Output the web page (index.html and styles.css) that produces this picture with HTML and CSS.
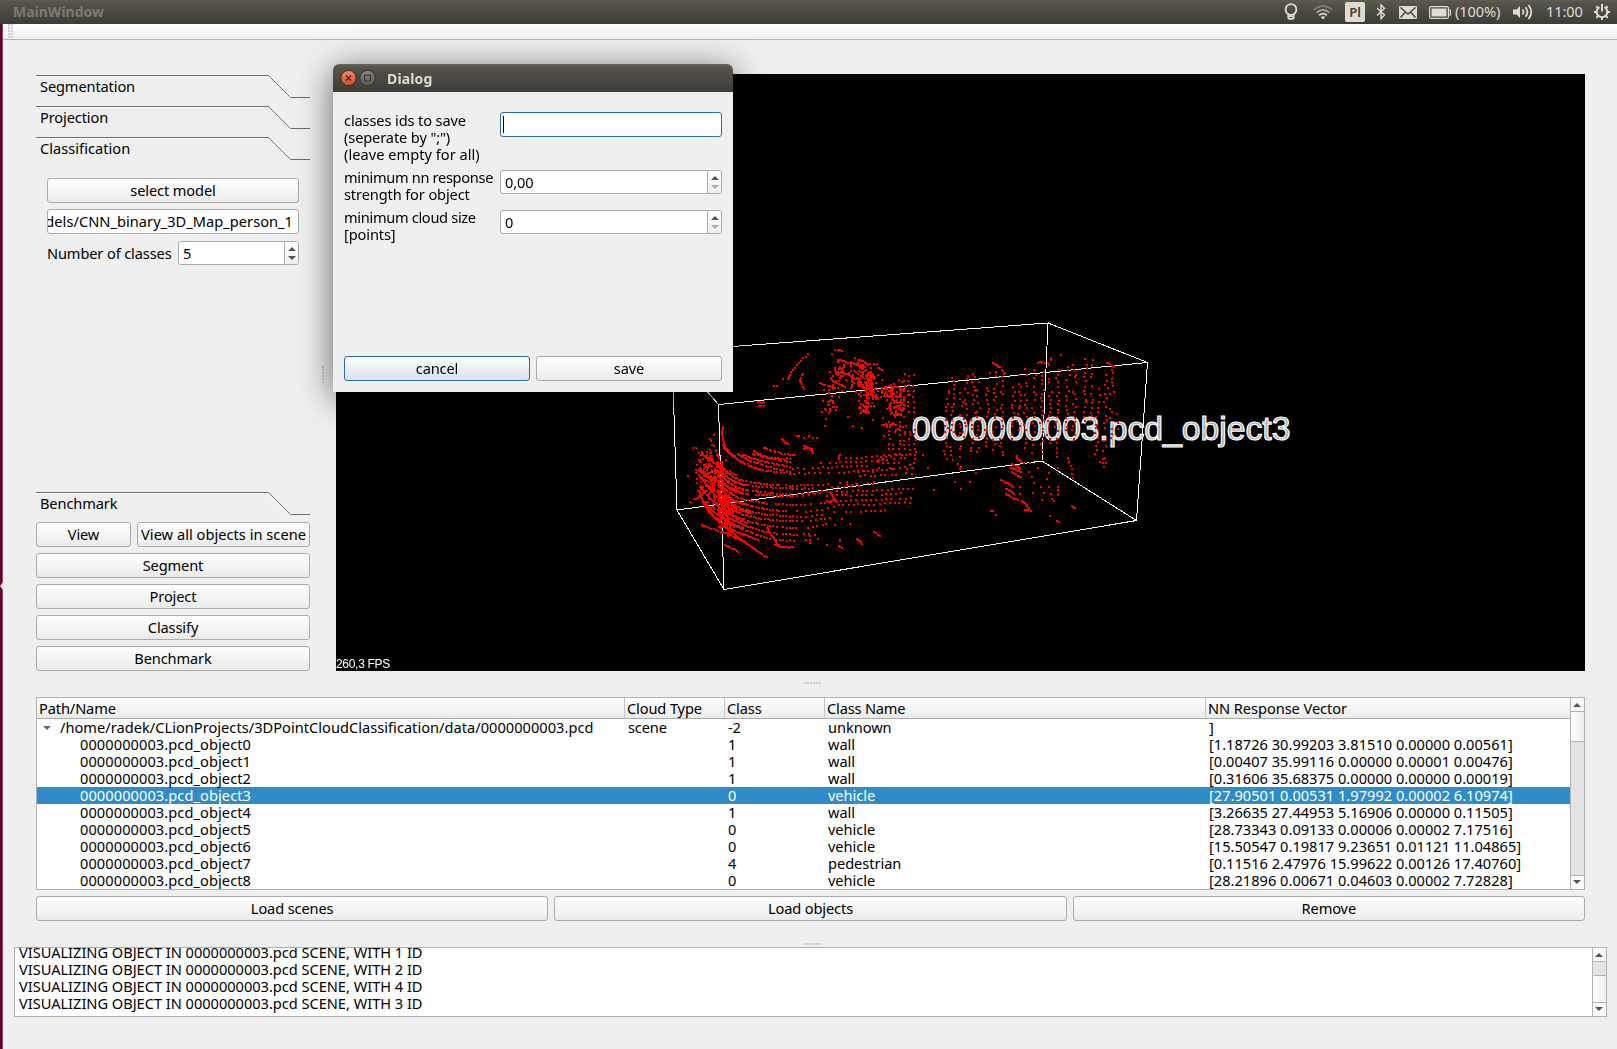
FILE: index.html
```html
<!DOCTYPE html>
<html lang="en">
<head>
<meta charset="utf-8">
<title>MainWindow</title>
<link rel="stylesheet" href="styles.css">
</head>
<body>
<header class="topbar">
  <span class="app-title">MainWindow</span>
  <div class="tray">
    <svg class="i-bulb" width="14" height="18" viewBox="0 0 14 18"><circle cx="7" cy="6.5" r="5.4"/><path d="M4.3 11v3.8q0 1 1 1h3.400q1 0 1-1V11M4.500 13.300h5"/></svg>
    <svg class="i-wifi" width="20" height="15" viewBox="0 0 20 15"><path class="dim" d="M.8 5Q10-3 19.200 5"/><path class="mid" d="M3.600 7.700Q10 2 16.400 7.700"/><path d="M6.200 10.300Q10 7 13.800 10.300"/><path class="solid" d="M7.800 12Q10 10.300 12.200 12L10 14.500z"/></svg>
    <span class="layout">Pl</span>
    <svg class="i-bt" width="10" height="18" viewBox="0 0 10 18"><path d="M1 5l7.500 7L5 15.800V2L8.500 5.500 1 12.600"/></svg>
    <svg class="i-mail" width="18" height="13" viewBox="0 0 18 13"><rect width="18" height="13" rx="1"/><path d="M1.500 1.500L9 8l7.500-6.500M1.500 11.500L6.500 6M16.500 11.500L11.500 6"/></svg>
    <svg class="i-batt" width="22" height="13" viewBox="0 0 22 13"><rect class="out" x=".6" y=".6" width="18.800" height="11.800" rx="1.500"/><rect class="in" x="2.500" y="2.500" width="15" height="8"/><path d="M20 4h1.400v5H20"/></svg>
    <span class="percent">(100%)</span>
    <svg class="i-vol" width="20" height="16" viewBox="0 0 20 16"><path class="solid" d="M0 5.500h3.500L7 2v12L3.500 10.500H0z"/><path d="M9.500 5.500q2 2.500 0 5M12.500 3.300q3.800 4.700 0 9.400M15.500 1q5.600 7 0 14"/></svg>
    <span class="clock">11:00</span>
    <svg class="i-gear" width="18" height="18" viewBox="0 0 18 18"><path d="M6.500 4.200a5.300 5.300 0 1 0 5 0M9 1v7.500"/><path class="teeth" d="M1 9h3M14 9h3M9 14v3M3.300 3.300l2 2M14.700 3.300l-2 2M3.300 14.700l2-2M14.700 14.700l-2-2"/></svg>
  </div>
</header>
<main class="shell">
  <div class="launcher-edge"><i></i></div>
  <div class="window">
    <div class="toolbar"><i class="grip"></i></div>
    <div class="upper">
      <aside class="panel">
        <div class="tab"><svg width="274" height="24"><path class="hi" d="M0 2.500H232L254 24H274"/><path d="M0 1.500H232.500L254.500 23.500H274"/></svg><span>Segmentation</span></div>
        <div class="tab"><svg width="274" height="24"><path class="hi" d="M0 2.500H232L254 24H274"/><path d="M0 1.500H232.500L254.500 23.500H274"/></svg><span>Projection</span></div>
        <div class="tab"><svg width="274" height="24"><path class="hi" d="M0 2.500H232L254 24H274"/><path d="M0 1.500H232.500L254.500 23.500H274"/></svg><span class="wide">Classification</span></div>
        <div class="page">
          <button class="btn">select model</button>
          <div class="field path"><span>dels/CNN_binary_3D_Map_person_1</span></div>
          <div class="classes"><span>Number of classes</span><div class="field spin"><span>5</span><div class="steps"><i class="up"></i><i class="down"></i></div></div></div>
        </div>
        <div class="tab"><svg width="274" height="24"><path class="hi" d="M0 2.500H232L254 24H274"/><path d="M0 1.500H232.500L254.500 23.500H274"/></svg><span>Benchmark</span></div>
        <div class="actions">
          <div class="views"><button class="btn view">View</button><button class="btn all">View all objects in scene</button></div>
          <button class="btn">Segment</button>
          <button class="btn">Project</button>
          <button class="btn">Classify</button>
          <button class="btn">Benchmark</button>
        </div>
      </aside>
      <div class="vsplit"><i></i></div>
      <section class="viewport">
        <svg class="box" width="1249" height="597"><path d="M382.500 330.500L811.500 288.500L800.500 446.500L388 515.500L382.500 330.500M336 277L712 249L706 387L341 436L336 277L382.500 330.500M712 249L811.500 288.500M706 387L800.500 446.500M341 436L388 515.500"/></svg>
        <span class="object-label">0000000003.pcd_object3</span>
        <canvas class="cloud" width="1249" height="597"></canvas>
        <span class="fps">260,3 FPS</span>
      </section>
    </div>
    <div class="hsplit"></div>
    <section class="tree">
      <div class="rows">
        <div class="row head"><span>Path/Name</span><span>Cloud Type</span><span>Class</span><span>Class Name</span><span>NN Response Vector</span></div>
        <div class="row scene"><span>/home/radek/CLionProjects/3DPointCloudClassification/data/0000000003.pcd</span><span>scene</span><span>-2</span><span>unknown</span><span>]</span></div>
        <div class="row"><span>0000000003.pcd_object0</span><span></span><span>1</span><span>wall</span><span>[1.18726 30.99203 3.81510 0.00000 0.00561]</span></div>
        <div class="row"><span>0000000003.pcd_object1</span><span></span><span>1</span><span>wall</span><span>[0.00407 35.99116 0.00000 0.00001 0.00476]</span></div>
        <div class="row"><span>0000000003.pcd_object2</span><span></span><span>1</span><span>wall</span><span>[0.31606 35.68375 0.00000 0.00000 0.00019]</span></div>
        <div class="row selected"><span>0000000003.pcd_object3</span><span></span><span>0</span><span>vehicle</span><span>[27.90501 0.00531 1.97992 0.00002 6.10974]</span></div>
        <div class="row"><span>0000000003.pcd_object4</span><span></span><span>1</span><span>wall</span><span>[3.26635 27.44953 5.16906 0.00000 0.11505]</span></div>
        <div class="row"><span>0000000003.pcd_object5</span><span></span><span>0</span><span>vehicle</span><span>[28.73343 0.09133 0.00006 0.00002 7.17516]</span></div>
        <div class="row"><span>0000000003.pcd_object6</span><span></span><span>0</span><span>vehicle</span><span>[15.50547 0.19817 9.23651 0.01121 11.04865]</span></div>
        <div class="row"><span>0000000003.pcd_object7</span><span></span><span>4</span><span>pedestrian</span><span>[0.11516 2.47976 15.99622 0.00126 17.40760]</span></div>
        <div class="row"><span>0000000003.pcd_object8</span><span></span><span>0</span><span>vehicle</span><span>[28.21896 0.00671 0.04603 0.00002 7.72828]</span></div>
      </div>
      <div class="scroll"><b><i class="up"></i></b><div class="track"><div class="thumb tree-thumb"></div></div><b class="end"><i class="down"></i></b></div>
    </section>
    <div class="loads"><button class="btn">Load scenes</button><button class="btn">Load objects</button><button class="btn">Remove</button></div>
    <div class="hsplit second"></div>
    <section class="log">
      <div class="lines">
        <p>VISUALIZING OBJECT IN 0000000003.pcd SCENE, WITH 1 ID</p>
        <p>VISUALIZING OBJECT IN 0000000003.pcd SCENE, WITH 2 ID</p>
        <p>VISUALIZING OBJECT IN 0000000003.pcd SCENE, WITH 4 ID</p>
        <p>VISUALIZING OBJECT IN 0000000003.pcd SCENE, WITH 3 ID</p>
      </div>
      <div class="scroll"><b><i class="up"></i></b><div class="track"><div class="thumb log-thumb"></div></div><b class="end"><i class="down"></i></b></div>
    </section>
  </div>
</main>
<div class="dialog">
  <div class="titlebar">
    <svg width="36" height="18" viewBox="0 0 36 18"><defs><linearGradient id="red" x2="0" y2="1"><stop stop-color="#f58a68"/><stop offset="1" stop-color="#dc4a20"/></linearGradient><linearGradient id="gray" x2="0" y2="1"><stop stop-color="#8b887e"/><stop offset="1" stop-color="#5d5b54"/></linearGradient></defs><circle cx="8.500" cy="9" r="7.600" fill="url(#red)" stroke="#35332e"/><path d="M6 6.500l5 5M11 6.500l-5 5" stroke="#48261b" stroke-width="1.300"/><circle cx="27.500" cy="9" r="7.600" fill="url(#gray)" stroke="#35332e"/><rect x="24.500" y="6" width="6" height="6" fill="none" stroke="#35332e"/></svg>
    <strong>Dialog</strong>
  </div>
  <div class="form">
    <label>classes ids to save<br>(seperate by ";")<br><span class="wide">(leave empty for all)</span></label><div class="field focus"><i class="caret"></i></div>
    <label><span class="narrow">minimum nn response</span><br>strength for object</label><div class="field spin"><span>0,00</span><div class="steps"><i class="up"></i><i class="down off"></i></div></div>
    <label><span class="narrow">minimum cloud size</span><br>[points]</label><div class="field spin"><span>0</span><div class="steps"><i class="up"></i><i class="down off"></i></div></div>
  </div>
  <div class="choices"><button class="btn default">cancel</button><button class="btn">save</button></div>
</div>
<script src="cloud.js"></script>
</body>
</html>
```
FILE: styles.css
```css
* { box-sizing: border-box; }
body {
  margin: 0; width: 1617px; height: 1049px; overflow: hidden;
  display: flex; flex-direction: column;
  font: 14.6px/17px "Noto Sans", sans-serif; letter-spacing: -.12px;
  color: #000; background: #efefef; white-space: nowrap;
}
button { font: inherit; letter-spacing: inherit; color: inherit; }
p { margin: 0; }
.wide { letter-spacing: .03px; }
.narrow { letter-spacing: -.32px; }
.topbar {
  height: 24px; flex: none; display: flex; align-items: center; justify-content: space-between;
  padding: 0 6px 0 13px; background: linear-gradient(#5f5c50 0, #56534a 3px, #3d3c38);
  color: #dfdbd2;
}
.app-title { font-weight: 700; color: #7d7a73; font-size: 14px; letter-spacing: 0; margin-top: -1px; }
.tray { display: flex; align-items: center; }
.tray svg { fill: none; stroke: #dfdbd2; stroke-width: 1.8; }
.tray .solid { fill: #dfdbd2; stroke: none; }
.i-bulb { margin-right: 15px; }
.i-wifi { margin-right: 12px; }
.i-wifi .dim { stroke: #7c7a73; }
.i-wifi .mid { stroke: #a6a39b; }
.layout { width: 20px; height: 20px; line-height: 20px; border-radius: 2px; background: #dfdbd2; color: #3d3c38; font-size: 13px; font-weight: 600; text-align: center; margin-right: 11px; }
.tray .i-bt { stroke-width: 1.4; margin-right: 13px; }
.i-mail { margin-right: 12px; }
.i-mail rect { fill: #dfdbd2; stroke: none; }
.tray .i-mail path { stroke: #45433d; stroke-width: 1.4; }
.i-batt { margin-right: 4px; }
.tray .i-batt { stroke-width: 1.2; }
.i-batt .in { fill: #dfdbd2; stroke: none; }
.percent { width: 46px; margin-right: 12px; }
.i-vol { margin-right: 13px; }
.clock { width: 36px; margin-right: 11px; }
.tray .i-gear { stroke-width: 2; }
.percent, .clock { font-size: 14.6px; margin-top: -1px; }

.shell { flex: 1; display: flex; min-height: 0; }
.launcher-edge { width: 3px; background: linear-gradient(90deg, #5c0530 2px, #8c4767 2px); padding-top: 558px; }
.launcher-edge i { display: block; border: 4px solid transparent; border-left: 0; border-right: 3px solid #ddd; }
.window { flex: 1; display: flex; flex-direction: column; min-width: 0; }
.toolbar { height: 16px; flex: none; background: linear-gradient(#fff, #efefef); border-bottom: 1px solid #b5b7b7; padding-left: 5px; }
.grip { display: block; width: 5px; height: 15px; background: radial-gradient(circle at 1px 1px, #ccc .8px, transparent 1px) 0 0 / 3px 3px; }

.upper { display: flex; padding: 34px 0 0 33px; height: 631px; flex: none; }
.panel { width: 274px; display: flex; flex-direction: column; }
.tab { height: 31px; display: grid; flex: none; }
.tab > * { grid-area: 1 / 1; }
.tab path { fill: none; stroke: #6e6e6e; }
.tab .hi { stroke: #fff; }
.tab span { padding: 4px 0 0 4px; }
.page { height: 324px; margin: 11px 11px 0; padding: 0; display: flex; flex-direction: column; gap: 6px; }
.btn {
  display: block; height: 25px; flex: none; padding: 0; border: 1px solid #ababab; border-radius: 3px;
  background: linear-gradient(#fefefe, #ebebeb); line-height: 21px; text-align: center;
}
.field { height: 25px; background: #fff; border: 1px solid #ababab; border-radius: 3px; overflow: hidden; display: flex; }
.path { justify-content: flex-end; padding-right: 5px; line-height: 23px; flex: none; letter-spacing: .04px; }
.classes { display: flex; justify-content: space-between; line-height: 24px; margin-top: 1px; }
.spin { height: 24px; line-height: 22px; padding-left: 4px; justify-content: space-between; }
.classes .spin { width: 121px; }
.steps { width: 14px; border-left: 1px solid #ababab; background: linear-gradient(#fefefe, #eee); display: flex; flex-direction: column; align-items: center; justify-content: space-between; padding: 5px 0 4px; }
.up, .down { display: block; border: 4px solid transparent; width: 0; height: 0; }
.up { border-bottom-color: #555; border-top: 0; }
.down { border-top-color: #555; border-bottom: 0; }
.down.off { border-top-color: #aaa; }
.actions { display: flex; flex-direction: column; gap: 6px; }
.views { display: flex; gap: 6px; }
.view { width: 95px; }
.all { flex: 1; letter-spacing: .03px; }
.vsplit { width: 26px; padding: 292px 0 0 12px; }
.vsplit i { display: block; width: 2px; height: 17px; background: radial-gradient(circle at 1px 1px, #ccc .8px, transparent 1px) 0 0 / 3px 3px; }
.viewport { width: 1249px; height: 597px; background: #000; position: relative; overflow: hidden; color: #fff; }
.box, .cloud { position: absolute; left: 0; top: 0; }
.box path { fill: none; stroke: #fff; shape-rendering: crispEdges; }
.object-label { position: absolute; left: 576px; top: 335px; font: 33.700px/38px "Liberation Sans", sans-serif; letter-spacing: 0; color: #a8a8a8; -webkit-text-stroke: 1.200px #fff; }
.fps { position: absolute; left: 0; bottom: -2px; font: 12px/18px "Liberation Sans", sans-serif; letter-spacing: -.3px; }

.hsplit { height: 26px; flex: none; background: radial-gradient(circle at 1px 1px, #ccc .8px, transparent 1px) 0 0 / 3px 3px; background-clip: content-box; background-origin: content-box; padding: 11px 796px 13px 801px; }
.tree { height: 193px; flex: none; margin: 0 32px 0 33px; border: 1px solid #b1b1b1; background: #fff; display: flex; }
.rows { flex: 1; overflow: hidden; }
.row { display: grid; grid-template-columns: 588px 100px 100px 381px 1fr; height: 17px; }
.row span { padding-left: 3px; }
.row span:first-child { padding-left: 43px; letter-spacing: .08px; }
.row span:nth-child(4) { letter-spacing: -.04px; }
.row span:last-child { letter-spacing: .015px; }
.row.selected { background: #308cc6; color: #fff; }
.row.head { height: 21px; line-height: 21px; border-bottom: 1px solid #a9a9a9; background: linear-gradient(#fefefe, #ebebeb); }
.head span + span { border-left: 1px solid #c4c4c4; padding-left: 2px; margin-left: -1px; }
.row.head span:first-child { padding-left: 2px; letter-spacing: -.12px; }
.row.head span:nth-child(4) { letter-spacing: -.17px; }
.row.head span:last-child { letter-spacing: -.05px; }
.row.scene span:first-child { padding-left: 23px; display: flex; letter-spacing: .025px; }
.row.scene span:first-child::before { content: ""; border: 4px solid transparent; border-top-color: #666; border-bottom: 0; height: 0; margin: 7px 9px 0 -17px; }
.scroll { width: 14px; border-left: 1px solid #b5b5b5; display: flex; flex-direction: column; background: #e4e4e4; }
.scroll b { height: 14px; flex: none; border-bottom: 1px solid #b5b5b5; background: #fafafa; display: flex; justify-content: center; padding: 5px 1px 0 0; }
.scroll b.end { border: 0; border-top: 1px solid #b5b5b5; padding-top: 4px; }
.track { flex: 1; }
.thumb { background: linear-gradient(90deg, #fff, #eee); border-bottom: 1px solid #b5b5b5; }
.tree-thumb { height: 30px; }
.log-thumb { height: 27px; margin-top: 13px; border-top: 1px solid #b5b5b5; border-bottom: 0; }
.loads { display: grid; grid-template-columns: repeat(3, 1fr); gap: 6px; margin: 6px 32px 0 33px; flex: none; }
.hsplit.second { padding-top: 22px; padding-bottom: 2px; }
.log { height: 70px; flex: none; margin: 0 10px 0 11px; border: 1px solid #b1b1b1; background: #fff; display: flex; overflow: hidden; }
.lines { flex: 1; height: 68px; padding-left: 4px; overflow: hidden; letter-spacing: -.015px; }
.lines p:first-child { margin-top: -4px; }

.dialog {
  position: absolute; left: 333px; top: 64px; width: 400px; height: 328px;
  display: flex; flex-direction: column; background: #efefef; border-radius: 6px 6px 0 0;
  box-shadow: 0 6px 34px rgba(0, 0, 0, .6);
}
.titlebar { height: 28px; flex: none; border-radius: 6px 6px 0 0; background: linear-gradient(#69665b 0, #55534a 3px, #3d3c38); display: flex; align-items: center; padding-left: 7px; color: #dfdbd2; }
.titlebar strong { margin-left: 11px; font-size: 14px; letter-spacing: .15px; }
.form { padding: 20px 11px 0; display: grid; grid-template-columns: 156px 222px; grid-template-rows: 57px 40px 40px; height: 264px; align-content: start; }
.form .field { margin-top: 0; }
.form .spin { margin-top: 1px; }
.focus { border: 1px solid #25719f; }
.caret { width: 1px; height: 17px; background: #000; margin: 3px 0 0 2px; }
.choices { display: grid; grid-template-columns: 1fr 1fr; gap: 6px; padding: 0 11px; }
.default { border-color: #25719f; background: linear-gradient(#fdfdfe, #d9e2ea); }
```
FILE: cloud.js
```js
// Draws the LIDAR returns of the selected object as 2px squares.
const ctx = document.querySelector('.cloud').getContext('2d');
ctx.fillStyle = '#f00';
let seed = 7;
const rnd = () => (seed = (seed * 16807) % 2147483647) / 2147483647;
const dot = (x, y) => ctx.fillRect(Math.round(323 + x / 3), Math.round(235 + y / 3), 2, 2);

// Scan lines: start, control, end, spacing
function arc(x0, y0, cx, cy, x1, y1, step, jitter = 2, keep = 1) {
  const n = Math.max(1, Math.round(Math.hypot(x1 - x0, y1 - y0) / step));
  for (let i = 0; i <= n; i++) {
    const t = i / n, u = 1 - t;
    if (rnd() > keep) continue;
    dot(u * u * x0 + 2 * u * t * cx + t * t * x1 + (rnd() - .5) * jitter,
        u * u * y0 + 2 * u * t * cy + t * t * y1 + (rnd() - .5) * jitter);
  }
}
function cluster(x, y, sx, sy, n, tilt = 0) {
  for (let i = 0; i < n; i++) {
    const g = rnd() + rnd() + rnd() - 1.5, h = rnd() + rnd() + rnd() - 1.5;
    dot(x + g * sx, y + h * sy + g * sx * tilt);
  }
}
[
  [188,352,180,410,225,438,5],[188,405,220,455,300,478,5],[300,478,340,488,390,488,9],
  [235,433,270,460,390,486,7],[250,435,300,455,390,470,7],[282,424,320,445,390,456,7],
  [310,413,350,430,405,436,7],[278,432,330,450,390,445,9],
  [365,385,372,398,384,402,5],[432,408,445,412,458,428,4],[432,416,440,410,456,418,4],
  [384,208,400,170,445,132,9],[418,210,425,220,432,238,8],[428,190,425,200,418,212,9],
  [526,120,538,120,546,123,6],[532,150,545,150,557,155,5],[592,150,602,150,618,158,4],
  [575,158,590,165,612,172,5],[482,220,505,230,525,232,5],[515,210,535,220,555,232,5],
  [530,185,560,190,590,208,5],[295,275,300,280,312,278,6],[296,288,303,290,312,288,7],
  [125,425,135,450,230,496,5],[118,480,150,510,240,545,5],[120,500,170,560,260,585,5],
  [130,510,170,580,270,610,5],[122,530,160,590,260,640,5],[135,575,165,620,250,655,5],
  [120,545,130,600,190,645,3],[138,590,180,650,320,742,4],[190,645,230,670,295,688,5],[190,665,220,682,256,694,5],
  [195,705,215,715,235,725,5],[126,645,150,655,190,668,7],[105,568,120,560,132,548,5],
  [320,655,335,675,355,705,5],[345,705,370,715,398,712,5],[535,448,538,440,540,433,6],
  [508,545,518,555,528,572,5],[505,578,515,575,525,568,6],[592,688,600,692,606,701,4],
  [538,708,541,711,545,712,4],[642,668,652,672,660,678,7],[655,172,660,175,665,180,5]
].forEach(a => arc(...a));
// Ground sweeps fanning out to the right
[[511,525,560],[523,533,640],[537,550,500],[551,556,490],[566,583,530],[580,602,520],[596,618,520],[612,632,510],[626,652,500],[642,672,490],[656,690,450]].forEach(([a, b, end]) => {
  arc(175, a - 55, 200, a - 12, 250, a + 1, 4.5);
  arc(250, a + 1, 310, b, 400, b + 2, 9, 2, .93);
  arc(410, b + 2, 460, b + 3, end, b - 10, 15, 4, .8);
});
[[472,400,620],[489,390,640],[456,480,680],[440,560,740],[480,580,755],[495,600,755],[522,560,640],[541,530,760],[554,500,755],[569,500,752],[583,520,750],[604,560,690]].forEach(([y, a, b]) =>
  arc(a, y + 4, (a + b) / 2, y, b, y - 5, 15, 4, .92));
cluster(148, 480, 38, 65, 120); cluster(170, 530, 50, 65, 80, .5);
cluster(190, 600, 40, 60, 60, .6); cluster(200, 650, 28, 25, 25, .4);
cluster(540, 195, 34, 45, 40); cluster(605, 205, 40, 50, 80, .3);
cluster(628, 235, 20, 60, 105); cluster(612, 295, 18, 22, 30, .5);
cluster(685, 245, 45, 28, 55); cluster(712, 295, 30, 60, 70);
cluster(515, 275, 28, 35, 24); cluster(690, 345, 30, 12, 12);
for (let x = 655; x < 765; x += 15) for (let y = 345; y < 480; y += 14)
  if (rnd() < .78 && x + (y - 345) / 8 > 665) dot(x + rnd() * 7, y + rnd() * 7);
for (let x = 735; x < 765; x += 14) for (let y = 190; y < 330; y += 16) if (rnd() < .75) dot(x - 5 + rnd() * 6, y + rnd() * 8);
// Far wall, swept column by column
[[862,240,460],[881,200,462],[905,250,500],[920,195,390],[941,190,435],[958,190,430],[985,165,430],[1008,170,430],[1030,190,440],[1062,220,390],[1080,180,400],[1100,178,420],[1125,168,440],[1150,185,445],[1172,140,410],[1195,180,450],[1225,155,375],[1245,165,390],[1278,150,345],[1298,150,340],[1315,240,440],[1340,160,480],[1358,165,405]].forEach(([x, a, b]) => {
  for (let y = a; y < b; y += 13) if (rnd() < .84) dot(x + (rnd() - .5) * 11 - (y - a) / 40, y + (rnd() - .5) * 7);
});
[[1000,160,1012,165,1036,188,6],[1134,158,1145,155,1165,160,7],[1340,160,1355,165,1362,170,7],
 [1025,512,1045,520,1060,530,5],[1037,535,1050,542,1062,550,5],[1038,552,1052,560,1072,570,5],
 [1086,574,1098,580,1108,598,4],[1094,600,1100,600,1113,602,6],[1055,462,1070,468,1080,476,4],
 [1055,473,1065,480,1082,486,4],[1056,487,1068,494,1082,500,5],[1070,440,1075,450,1090,460,5],
 [1235,590,1240,590,1246,594,4],[992,601,997,601,1000,603,4],[1224,445,1237,470,1238,505,12]
].forEach(a => arc(...a));
[342,228,350,228,369,208,84,498,98,413,108,413,150,387,162,375,90,576,103,566,410,378,416,378,433,383,448,378,470,384,460,385,486,306,498,326,494,348,564,321,579,348,606,354,640,330,669,324,515,132,641,162,570,642,546,628,525,645,501,704,540,690,474,686,450,698,465,675,540,693,768,426,789,435,804,474,822,540,884,516,903,537,930,516,900,478,948,488,1008,615,1170,618,1191,633,1197,636,1203,135,1119,548,1080,530,1080,552,1146,570,1176,568,1182,573,1152,550,1174,552,1194,555,1194,540,1167,530,1143,530,1122,520,1161,508,1167,490,1135,475,1106,485,1116,500,1110,458,1194,475,1195,530,1337,460,1320,455,1335,445,1370,312,1375,340,1374,358]
  .forEach((v, i, p) => { if (i % 2) dot(p[i - 1], v); });
```
